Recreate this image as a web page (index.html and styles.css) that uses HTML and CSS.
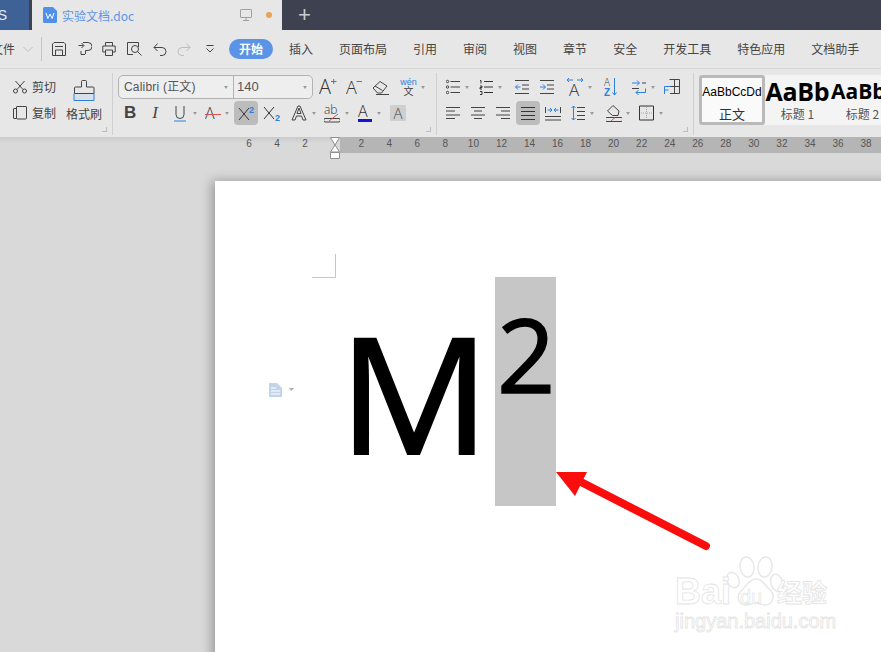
FILE: index.html
```html
<!DOCTYPE html>
<html lang="zh">
<head>
<meta charset="utf-8">
<title>实验文档.doc</title>
<link rel="stylesheet" href="styles.css">
</head>
<body>
<div class="app">
  <div class="tabbar">
    <div class="tab-home"><span>WPS</span></div>
    <div class="tab-doc">
      <svg class="doc-icon" viewBox="0 0 14 16"><path class="solid-blue" d="M1.500 0H10l4 4v10.500a1.500 1.500 0 0 1-1.500 1.500h-11A1.500 1.500 0 0 1 0 14.500v-13A1.500 1.500 0 0 1 1.500 0z"/><path class="white-line" d="M3 6l1.800 5.500L7 7l2.200 4.500L11 6"/></svg>
      <span class="doc-title">实验文档.doc</span>
      <svg class="monitor" viewBox="0 0 12 12"><path d="M1 .5h10a.5.500 0 0 1 .5.500v7a.5.500 0 0 1-.5.500H1a.5.500 0 0 1-.5-.500V1A.5.500 0 0 1 1 .5zM6 8.500v3M3 11.500h6"/></svg>
      <span class="dot"></span>
    </div>
    <span class="plus">+</span>
  </div>

  <div class="menubar">
    <span class="file-menu">文件</span>
    <svg class="i w10 file-chev" viewBox="0 0 10 20"><path class="faint" d="M.5 8l4.500 4.500L9.500 8"/></svg>
    <span class="vsep"></span>
    <svg class="i w14 q1" viewBox="0 0 14 20"><path d="M2 3.500h10l1.500 1.500v11.500h-13V5zM3 7.500h8M3.500 16.500v-5.500h7v5.500"/></svg>
    <svg class="i w14 q2" viewBox="0 0 14 20"><path d="M.5 6.500h5M3.500 4l2.500 2.500L3.500 9M5 3.500h5a3.500 3.500 0 0 1 0 8H7.500v3.500M3 12v3.500h4"/></svg>
    <svg class="i w14 q3" viewBox="0 0 14 20"><path d="M3.500 7V3.500h7V7M3 13H.8V7h12.400v6H11M3.500 11h7v5.500h-7z"/></svg>
    <svg class="i w16 q4" viewBox="0 0 16 20"><path d="M6 15.500H.5v-12h11V8"/><circle cx="8" cy="10" r="3.500"/><path d="M10.500 12.500l4 4"/></svg>
    <svg class="i w14 q5" viewBox="0 0 14 20"><path d="M1 8.500h8a4 4 0 0 1 0 8H7M4.500 4.500l-3.500 4 3.500 3.500"/></svg>
    <svg class="i w14 q6" viewBox="0 0 14 20"><path class="faint" d="M13 8.500H5a4 4 0 0 0 0 8h2M9.500 4.500l3.500 4-3.500 3.500"/></svg>
    <svg class="i w10 q7" viewBox="0 0 10 20"><path d="M1.500 6.500h7M1.500 9.500l3.500 3.500 3.500-3.500"/></svg>
    <span class="tab active">开始</span>
    <span class="tab first">插入</span>
    <span class="tab">页面布局</span>
    <span class="tab">引用</span>
    <span class="tab">审阅</span>
    <span class="tab">视图</span>
    <span class="tab">章节</span>
    <span class="tab">安全</span>
    <span class="tab">开发工具</span>
    <span class="tab">特色应用</span>
    <span class="tab">文档助手</span>
  </div>

  <div class="ribbon">
    <section class="group clip">
      <div class="clip-actions">
        <div class="clip-row">
          <svg class="i w14" viewBox="0 0 14 20"><circle cx="2.500" cy="14" r="2"/><circle cx="11.500" cy="14" r="2"/><path d="M4 12.500L11.500 4M10 12.500L2.500 4"/></svg>
          <span>剪切</span>
        </div>
        <div class="clip-row">
          <svg class="i w14" viewBox="0 0 14 20"><path d="M3.500 15.500H1a.5.500 0 0 1-.5-.500V6a.5.500 0 0 1 .5-.500h2.500M4 3.500h9a.5.500 0 0 1 .5.500v11a1 1 0 0 1-1 1H4.500a1 1 0 0 1-1-1V4a.5.500 0 0 1 .5-.500z"/></svg>
          <span>复制</span>
        </div>
      </div>
      <div class="painter">
        <svg class="painter-icon" viewBox="0 0 22 22"><path class="fill-pale" d="M1.500 14.500h19v6.500h-19z"/><path d="M8.500 8V2.500a1 1 0 0 1 1-1h3a1 1 0 0 1 1 1V8h6.500a1 1 0 0 1 1 .8V14.500H1.500V9a1 1 0 0 1 1-1z"/><path class="blue-line" d="M1 14.500v7h20v-7"/></svg>
        <span>格式刷</span>
      </div>
      <i class="launcher"></i>
    </section>

    <section class="group font">
      <div class="row">
        <div class="combo">
          <div class="combo-name"><span>Calibri (正文)</span><i class="caret"></i></div>
          <div class="combo-size"><span>140</span><i class="caret"></i></div>
        </div>
        <svg class="i w18 m6" viewBox="0 0 18 20"><text class="glyph" x="0" y="17" font-size="20">A</text><path class="blue-line" d="M12 4.500h5.500M14.700 2v5"/></svg>
        <svg class="i w16 m9" viewBox="0 0 16 20"><text class="glyph" x="0" y="17" font-size="18">A</text><path class="blue-line" d="M10.500 4.500H16"/></svg>
        <svg class="i w18 m10" viewBox="0 0 18 20"><path d="M1 11l7-6.500 7 4.500-5.500 7H5.500zM3 9l7.500 4.500M4 17.500h13"/></svg>
        <div class="wen m10"><span class="wen-top">wén</span><span class="wen-bot">文</span></div>
        <i class="caret m4"></i>
      </div>
      <div class="row">
        <b class="txt-ic bold m6">B</b>
        <em class="txt-ic ital m13">I</em>
        <svg class="i w12 m13" viewBox="0 0 12 20"><path d="M2 3v8.500a4 4 0 0 0 8 0V3"/><path class="blue-line" d="M0 18h12"/></svg>
        <i class="caret m7"></i>
        <svg class="i w16 m8" viewBox="0 0 16 20"><text class="glyph" x="0" y="16" font-size="16">A</text><path class="red-line" d="M0 11.500h16"/></svg>
        <i class="caret m4"></i>
        <div class="cell on m5"><svg class="i w18" viewBox="0 0 18 20"><path class="dark" d="M2 5l10 12M12 5L2 17"/><text class="blue-txt" x="12" y="10" font-size="9">2</text></svg></div>
        <svg class="i w18 m5" viewBox="0 0 18 20"><path class="dark" d="M1 4l10 12M11 4L1 16"/><text class="blue-txt" x="12" y="18" font-size="9">2</text></svg>
        <svg class="i w16 m10" viewBox="0 0 16 20"><path d="M1 17L7 3h2l6 14h-3l-1.500-4h-5L4 17zM6 10.500L8 5l2 5.500z"/></svg>
        <i class="caret m5"></i>
        <svg class="i w16 m8" viewBox="0 0 16 20"><text class="glyph" x="0" y="11" font-size="12">ab</text><path d="M1 15.500h14a1.800 1.800 0 0 1 0 3.500H1a1.800 1.800 0 0 1 0-3.500z"/><path class="red-line" d="M5 18l9-7"/></svg>
        <i class="caret m5"></i>
        <svg class="i w16 m8" viewBox="0 0 16 20"><text class="glyph" x="1" y="14" font-size="16">A</text><path class="navy" d="M1 17.500h14"/></svg>
        <i class="caret m4"></i>
        <div class="shaded m9">A</div>
      </div>
      <i class="launcher"></i>
    </section>

    <section class="group para">
      <div class="row">
        <svg class="i w14 m9" viewBox="0 0 14 20"><circle cx="1.500" cy="4.500" r="1.200"/><circle cx="1.500" cy="10" r="1.200"/><circle cx="1.500" cy="15.500" r="1.200"/><path d="M4.500 4.500H14M4.500 10H14M4.500 15.500H14"/></svg>
        <i class="caret m5"></i>
        <svg class="i w14 m10" viewBox="0 0 14 20"><path class="dark" d="M1 3.500h1v3M1 9h2v1.500H1V12h2M1 14.500h2v3H1M5 4.500h9M5 10h9M5 15.500h9"/></svg>
        <i class="caret m5"></i>
        <svg class="i w14 m13" viewBox="0 0 14 20"><path d="M0 3.500h14M7 8h7M7 12h7M0 16.500h14"/><path class="blue-line" d="M5.500 10H.5M3 7.500L.5 10 3 12.500"/></svg>
        <svg class="i w14 m11" viewBox="0 0 14 20"><path d="M0 3.500h14M7 8h7M7 12h7M0 16.500h14"/><path class="blue-line" d="M0 10h5M3 7.500L5.500 10 3 12.500"/></svg>
        <svg class="i w18 m12" viewBox="0 0 18 20"><text class="glyph" x="3" y="19" font-size="17">A</text><path class="blue-line" d="M1 3h6M3 1L1 3l2 2M11 3h6M15 1l2 2-2 2"/></svg>
        <i class="caret m4"></i>
        <svg class="i w14 m12" viewBox="0 0 14 20"><text class="glyph" x="0" y="9" font-size="10">A</text><text class="blue-txt" x="0" y="18.500" font-size="10">Z</text><path class="blue-line" d="M10.500 1v17M8.500 15.500l2 2.500 2-2.500"/></svg>
        <svg class="i w14 m14" viewBox="0 0 14 20"><path class="blue-line" d="M0 6h7M5 3.500L7.500 6 5 8.500M13.500 11.500v4H4M6.500 13L4 15.500 6.500 18"/><path d="M10 6h4M0 11.500h7"/></svg>
        <i class="caret m5"></i>
        <svg class="i w16 m9" viewBox="0 0 16 20"><path d="M5.500 2.500h10v14H6M10.500 2.500v14M6 9.500h9.500"/><path class="blue-line" d="M.5 17V9.500h6M.5 13h4"/></svg>
      </div>
      <div class="row">
        <svg class="i w14 m9" viewBox="0 0 14 20"><path d="M0 4.500h14M0 8h9M0 12h14M0 15.500h9"/></svg>
        <svg class="i w14 m11" viewBox="0 0 14 20"><path d="M0 4.500h14M3 8h8M0 12h14M3 15.500h8"/></svg>
        <svg class="i w14 m11" viewBox="0 0 14 20"><path d="M0 4.500h14M5 8h9M0 12h14M5 15.500h9"/></svg>
        <div class="cell on m6"><svg class="i w14" viewBox="0 0 14 20"><path class="dark" d="M0 4.500h14M0 8.500h14M0 12.500h14M0 16.500h14"/></svg></div>
        <svg class="i w16 m5" viewBox="0 0 16 20"><path d="M.5 4v6M15.500 4v6M0 13.500h16M0 17h16"/><path class="blue-line" d="M2.500 7h4M5 5L7 7 5 9M13.500 7h-4M11 5L9 7l2 2"/></svg>
        <svg class="i w14 m10" viewBox="0 0 14 20"><path d="M6 4.500h8M6 8.500h8M6 12.500h8M6 16.500h8"/><path class="blue-line" d="M2.500 3v14M.5 5l2-2 2 2M.5 15l2 2 2-2"/></svg>
        <i class="caret m5"></i>
        <svg class="i w16 m12" viewBox="0 0 16 20"><path d="M7 2.500L1.500 8l5 4.500h5.500L13 8zM1 14.500h14a1.800 1.800 0 0 1 0 4H1a1.800 1.800 0 0 1 0-4z"/><path class="red-line" d="M5 18l4-3.500"/></svg>
        <i class="caret m4"></i>
        <svg class="i w15 m9" viewBox="0 0 15 20"><path class="dark" d="M.5 3h14v14H.5z"/><path class="dots" d="M7.500 4v12M2 10h11"/></svg>
        <i class="caret m5"></i>
      </div>
      <i class="launcher"></i>
    </section>

    <section class="styles">
      <div class="style-box">
        <div class="style-cell current"><span class="s-sample">AaBbCcDd</span><span class="s-name">正文</span></div>
        <div class="style-cell h1"><span class="s-sample">AaBb</span><span class="s-name">标题 1</span></div>
        <div class="style-cell h2"><span class="s-sample">AaBb</span><span class="s-name">标题 2</span></div>
      </div>
    </section>
  </div>

  <div class="ruler">
    <span>6</span><span>4</span><span>2</span><span></span><span>2</span><span>4</span><span>6</span><span>8</span><span>10</span><span>12</span><span>14</span><span>16</span><span>18</span><span>20</span><span>22</span><span>24</span><span>26</span><span>28</span><span>30</span><span>32</span><span>34</span><span>36</span><span>38</span>
    <svg class="indent-marker" viewBox="0 0 10 22"><path d="M.5.500h9L5 8zM5 8l4.500 7h-9zM.5 15.500h9v6h-9z"/></svg>
  </div>

  <div class="canvas">
    <div class="page">
      <div class="margin-mark"></div>
      <div class="formula">
        <span class="base"><span class="base-glyph">M</span></span>
        <span class="super">2</span>
      </div>

      <svg class="para-icon" viewBox="0 0 26 14"><path class="pi-fill" d="M0 0h8l5 5v9H0z"/><path class="pi-line" d="M2 5h5M2 8h9M2 11h9"/><path class="pi-caret" d="M20 5h5l-2.500 3z"/></svg>

      <svg class="arrow" viewBox="0 0 170 90"><path class="arrow-line" d="M151 75L26 11"/><path class="arrow-head" d="M1 1h31L20 25z"/></svg>

      <div class="watermark">
        <svg class="paw" viewBox="0 0 62 56"><ellipse cx="8" cy="25" rx="6" ry="8" transform="rotate(-25 8 25)"/><ellipse cx="22" cy="12" rx="7" ry="10" transform="rotate(-8 22 12)"/><ellipse cx="40" cy="12" rx="7" ry="10" transform="rotate(8 40 12)"/><ellipse cx="52" cy="28" rx="6" ry="9" transform="rotate(-20 52 28)"/><path d="M31 24c7 0 9 7 14 11 6 5 3 15-5 15-4 0-6-2-9-2s-6 2-10 2c-8 0-10-9-5-14 5-4 8-12 15-12z"/></svg>
        <span class="wm-bai">Bai</span>
        <span class="wm-du">du</span>
        <span class="wm-jy">经验</span>
        <span class="wm-url">jingyan.baidu.com</span>
      </div>
    </div>
  </div>
</div>
</body>
</html>
```

FILE: styles.css
```css
* { box-sizing: border-box; }
html, body { margin: 0; padding: 0; }
body { background: #d9d9d9; }
.app {
  position: relative;
  width: 881px;
  height: 652px;
  overflow: hidden;
  font-family: "Noto Sans CJK SC", "Liberation Sans", sans-serif;
  font-size: 12px;
  color: #444;
  background: #d9d9d9;
}

/* title tabs */
.tabbar { display: flex; height: 30px; background: #3e4250; align-items: stretch; }
.tab-home {
  width: 29px; background: #3f6296; color: #e4ebf5; display: flex;
  justify-content: flex-end; align-items: center; overflow: hidden;
  font-family: "Liberation Sans", sans-serif; font-size: 14px; padding-right: 22px;
}
.tab-home span { flex-shrink: 0; }
.tab-doc {
  margin-left: 3px; width: 250px; background: #e7e7e7; display: flex; align-items: center;
  padding-left: 11px;
}
.doc-icon { width: 14px; height: 16px; flex-shrink: 0; }
.solid-blue { fill: #4f90ea; }
.white-line { fill: none; stroke: #fff; stroke-width: 1; }
.doc-title { margin-left: 5px; width: 178px; color: #5c95e4; font-size: 12px; font-family: "Noto Sans CJK SC", sans-serif; }
.monitor { width: 12px; height: 12px; fill: none; stroke: #a0a0a0; stroke-width: 1; }
.dot { width: 6px; height: 6px; border-radius: 50%; background: #e9a257; margin-left: 14px; margin-right: -2px; }
.plus { margin-left: 16px; color: #c9cbd0; font: 300 22px/30px "Liberation Sans", sans-serif; }

/* menu */
.menubar {
  display: flex; align-items: center; height: 39px; background: #e7e7e7;
  border-bottom: 1px solid #d6d6d6; padding-bottom: 1px;
}
.file-menu { margin-left: -9px; flex-shrink: 0; }
.file-chev { margin-left: 8px; }
.vsep { width: 1px; height: 24px; background: #c4c4c4; margin-left: 8px; }
.q1 { margin-left: 10px; }
.q2 { margin-left: 12px; }
.q3 { margin-left: 10px; }
.q4 { margin-left: 11px; }
.q5 { margin-left: 10px; }
.q6 { margin-left: 10px; }
.q7 { margin-left: 14px; }
.tab { margin-left: 26px; color: #444; white-space: nowrap; line-height: 20px; }
.tab.first { margin-left: 16px; }
.tab.active {
  margin-left: 14px; background: #5b94e6; color: #fff; font-weight: 700;
  border-radius: 10px; padding: 0 10px; height: 20px;
}

/* icons */
.i { display: block; height: 20px; flex-shrink: 0; fill: none; stroke: #444; stroke-width: 1; }
.w10 { width: 10px; } .w12 { width: 12px; } .w14 { width: 14px; } .w15 { width: 15px; }
.w16 { width: 16px; } .w18 { width: 18px; }
.m4 { margin-left: 4px; } .m5 { margin-left: 5px; } .m6 { margin-left: 6px; }
.m7 { margin-left: 7px; } .m8 { margin-left: 8px; } .m9 { margin-left: 9px; }
.m10 { margin-left: 10px; } .m11 { margin-left: 11px; } .m12 { margin-left: 12px; }
.m13 { margin-left: 13px; } .m14 { margin-left: 14px; }
.faint { stroke: #bdbdbd; }
.dark { stroke: #333; }
.blue-line { stroke: #2c80dc; fill: none; }
.red-line { stroke: #e2504f; fill: none; }
.navy { stroke: #1212d8; stroke-width: 3; }
.fill-pale { fill: #d8e1ea; stroke: none; }
.dots { stroke: #a8a8a8; stroke-dasharray: 1 1; }
.glyph { font-family: "Open Sans", sans-serif; font-weight: 300; fill: #333; stroke: none; }
.blue-txt { font-family: "Liberation Sans", sans-serif; font-weight: 700; fill: #2c80dc; stroke: none; }
.caret {
  display: block; width: 0; height: 0; flex-shrink: 0;
  border-left: 2.5px solid transparent; border-right: 2.5px solid transparent;
  border-top: 3px solid #9a9a9a;
}

/* ribbon */
.ribbon { display: flex; height: 68px; background: #e7e7e7; position: relative; }
.group { position: relative; border-right: 1px solid #cfcfcf; margin: 4px 0 2px; padding-top: 2px; }
.launcher {
  position: absolute; right: 5px; bottom: 3px; width: 5px; height: 5px;
  border-right: 1px solid #bdbdbd; border-bottom: 1px solid #bdbdbd;
}
.clip { width: 113px; display: flex; padding-left: 13px; }
.clip-actions { display: flex; flex-direction: column; gap: 2px; }
.clip-row { height: 24px; display: flex; align-items: center; gap: 5px; line-height: 16px; }
.painter { margin-left: 10px; width: 36px; display: flex; flex-direction: column; align-items: center; line-height: 16px; white-space: nowrap; }
.painter-icon { width: 22px; height: 22px; margin: 4px 0 5px; fill: none; stroke: #444; stroke-width: 1; }
.font { width: 324px; padding-left: 5px; display: flex; flex-direction: column; gap: 2px; }
.para { width: 257px; display: flex; flex-direction: column; gap: 2px; }
.row { display: flex; align-items: center; height: 24px; }
.combo {
  width: 195px; height: 24px; display: flex; border: 1px solid #b3b3b3; border-radius: 5px;
  background: #eeeeee; font-size: 12px; color: #555; line-height: 22px;
  font-family: "Liberation Sans", "Noto Sans CJK SC", sans-serif; flex-shrink: 0;
}
.combo-name { width: 115px; display: flex; align-items: center; justify-content: space-between; padding: 0 5px; border-right: 1px solid #b3b3b3; letter-spacing: .2px; }
.combo-size { flex: 1; display: flex; align-items: center; justify-content: space-between; padding: 0 5px 0 3px; font-size: 13px; }
.wen { width: 17px; display: flex; flex-direction: column; align-items: center; }
.wen-top { font: 9px/8px "Liberation Sans", sans-serif; color: #2c80dc; }
.wen-bot { font-size: 10px; line-height: 10px; color: #444; }
.txt-ic { width: 12px; text-align: center; font-family: "Liberation Sans", sans-serif; font-size: 17px; line-height: 24px; color: #444; }
.ital { font-family: "Liberation Serif", serif; font-weight: 400; }
.cell { width: 24px; height: 24px; display: flex; align-items: center; justify-content: center; border-radius: 4px; flex-shrink: 0; }
.cell.on { background: #bcbcbc; }
.shaded {
  width: 16px; height: 16px; background: #cfcfcf; text-align: center; border-radius: 1px;
  font: 300 15px/16px "Open Sans", sans-serif; color: #444;
}

/* style gallery */
.styles { flex: 1; padding: 6px 0 0 5px; overflow: hidden; }
.style-box { display: flex; height: 50px; width: 200px; background: #f4f4f4; border-radius: 3px; }
.style-cell { width: 65px; flex-shrink: 0; display: flex; flex-direction: column; align-items: center; height: 50px; overflow: hidden; }
.s-sample { white-space: nowrap; color: #000; height: 31px; display: flex; align-items: center; }
.s-name { color: #555; line-height: 16px; }
.current { border: 3px solid #b9b9b9; border-radius: 3px; background: #fafafa; width: 66px; }
.current .s-sample { font: 12px "Liberation Sans", sans-serif; height: 28px; }
.current .s-name { font-size: 13px; color: #333; }
.h1 .s-sample { font: 700 25px "Open Sans", sans-serif; letter-spacing: -.3px; }
.h2 .s-sample { font: 700 21px "Open Sans", sans-serif; align-self: flex-start; padding-left: 1px; }

/* ruler */
.ruler {
  position: relative; display: flex; height: 16px; padding-left: 235px;
  background: linear-gradient(to right, transparent 340px, #b5b5b5 340px), linear-gradient(#cacaca, #d9d9d9 6px);
  font: 10px/14px "Liberation Sans", sans-serif; color: #555;
}
.ruler span { width: 28.05px; flex-shrink: 0; text-align: center; }
.indent-marker { position: absolute; left: 330px; top: 0; width: 10px; height: 22px; fill: #fff; stroke: #8f8f8f; stroke-width: 1; }

/* document */
.canvas { height: 499px; padding: 28px 0 0 215px; overflow: hidden; background: #d9d9d9; }
.page { position: relative; width: 700px; height: 520px; background: #fff; box-shadow: -3px 0 11px rgba(0,0,0,.3); padding-top: 73px; }
.margin-mark { width: 24px; height: 24px; margin-left: 97px; border-right: 1px solid #c6c6c6; border-bottom: 1px solid #c6c6c6; }
.formula { display: flex; margin: -1px 0 0 121px; color: #000; font-family: "Open Sans", sans-serif; }
.base { display: block; width: 159px; height: 229px; padding-left: 3px; font-size: 162px; line-height: 229px; -webkit-text-stroke: 2px #000; }
.base-glyph { display: inline-block; transform: scaleX(1.04); transform-origin: 14px 0; }
.super { display: block; width: 61px; height: 229px; background: #c6c6c6; font-size: 102px; line-height: 102px; padding: 26px 0 0 2px; -webkit-text-stroke: 1.500px #000; }
.para-icon { position: absolute; left: 54px; top: 202px; width: 26px; height: 14px; }
.pi-fill { fill: #c2d4ea; }
.pi-line { stroke: #fff; stroke-width: 1; fill: none; }
.pi-caret { fill: #b0b0b0; }
.arrow { position: absolute; left: 340px; top: 290px; width: 170px; height: 90px; }
.arrow-line { stroke: #fb0d0d; stroke-width: 8; stroke-linecap: round; fill: none; }
.arrow-head { fill: #fb0d0d; }
.watermark { position: absolute; left: 460px; top: 372px; width: 170px; height: 85px; color: #fff; -webkit-text-stroke: .8px #e4e4e4; font-family: "Liberation Sans", sans-serif; }
.paw { position: absolute; left: 50px; top: 2px; width: 62px; height: 56px; fill: #fff; stroke: #e8e8e8; stroke-width: 1.500; }
.wm-bai { position: absolute; left: 0; top: 20px; font-size: 36px; line-height: 38px; font-weight: 700; }
.wm-du { position: absolute; left: 65px; top: 33px; font-size: 20px; line-height: 22px; -webkit-text-stroke: .5px #dcdcdc; }
.wm-jy { position: absolute; left: 102px; top: 23px; font: 700 25px/30px "Noto Sans CJK SC", sans-serif; }
.wm-url { position: absolute; left: 0; top: 56px; font-size: 20px; line-height: 24px; white-space: nowrap; }
```
